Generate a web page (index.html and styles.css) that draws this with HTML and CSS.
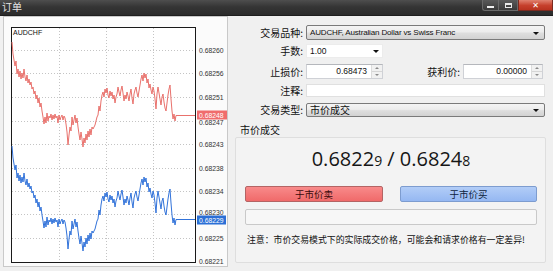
FILE: index.html
```html
<!DOCTYPE html>
<html>
<head>
<meta charset="utf-8">
<title>订单</title>
<link rel="stylesheet" href="styles.css">
</head>
<body>
<div class="window">
  <div class="titlebar">
    <span class="title">订单</span>
    <div class="controls">
      <span class="wbtn min"><i></i></span>
      <span class="wbtn max"><i></i></span>
      <span class="wbtn close">✕</span>
    </div>
  </div>
  <div class="main">
    <div class="chart-panel">
      <svg class="chart" width="223" height="249" viewBox="4 18 223 249">
        <rect x="11.5" y="28.5" width="184" height="235" fill="#fff" stroke="#1a1a1a"/>
        <g stroke="#c4c4c4" stroke-dasharray="1 2" stroke-width="1">
          <line x1="12" y1="51.5" x2="195" y2="51.5"/>
          <line x1="12" y1="74.5" x2="195" y2="74.5"/>
          <line x1="12" y1="98.5" x2="195" y2="98.5"/>
          <line x1="12" y1="122.5" x2="195" y2="122.5"/>
          <line x1="12" y1="145.5" x2="195" y2="145.5"/>
          <line x1="12" y1="169.5" x2="195" y2="169.5"/>
          <line x1="12" y1="192.5" x2="195" y2="192.5"/>
          <line x1="12" y1="215.5" x2="195" y2="215.5"/>
          <line x1="12" y1="239.5" x2="195" y2="239.5"/>
          <line x1="59.5" y1="29" x2="59.5" y2="263"/>
          <line x1="106.5" y1="29" x2="106.5" y2="263"/>
          <line x1="153.5" y1="29" x2="153.5" y2="263"/>
        </g>
        <text class="sym-label" x="13" y="36">AUDCHF</text>
        <g>
          <polyline class="ask" fill="none" stroke-width="1" points="12,43 13,55 15,67 16,62 17,75 18,70 19,78 20,72 21,80 22,74 23,79 24,70 25,78 26,82 27,76 28,84 29,80 30,86 31,83 32,90 33,88 34,95 35,92 36,100 37,96 38,104 39,99 40,108 41,104 42,112 43,118 44,125 45,118 46,124 47,114 48,122 49,117 50,119 51,115 52,121 53,116 54,120 55,115 56,119 57,117 58,124 59,116 60,121 61,118 62,116 63,121 64,117 65,119 66,125 67,133 68,146 69,136 70,128 71,132 72,118 73,126 74,121 75,116 76,124 77,119 78,128 79,135 80,141 81,133 82,140 83,148 84,139 85,144 86,135 87,141 88,132 89,138 90,130 91,136 92,128 93,130 94,128 95,126 96,122 97,118 98,116 99,107 100,112 101,102 102,96 103,93 104,98 105,90 106,94 107,89 108,96 109,99 110,92 111,97 112,93 113,100 114,96 115,104 116,98 117,95 118,88 119,93 120,97 121,91 122,87 123,94 124,102 125,96 126,100 127,93 128,97 129,102 130,95 131,90 132,99 133,105 134,95 135,91 136,88 137,94 138,98 139,92 140,86 141,80 142,76 143,82 144,74 145,79 146,75 147,84 148,80 149,89 150,85 151,91 152,95 153,88 154,92 155,100 156,110 157,95 158,88 159,94 160,100 161,106 162,98 163,95 164,103 165,109 166,112 167,104 168,96 169,90 170,86 171,100 172,112 173,120 174,115 175,122 176,116.5 195,116.5"/>
        </g>
        <g transform="translate(0,104)">
          <polyline class="bid" fill="none" stroke-width="1" points="12,43 13,55 15,67 16,62 17,75 18,70 19,78 20,72 21,80 22,74 23,79 24,70 25,78 26,82 27,76 28,84 29,80 30,86 31,83 32,90 33,88 34,95 35,92 36,100 37,96 38,104 39,99 40,108 41,104 42,112 43,118 44,125 45,118 46,124 47,114 48,122 49,117 50,119 51,115 52,121 53,116 54,120 55,115 56,119 57,117 58,124 59,116 60,121 61,118 62,116 63,121 64,117 65,119 66,125 67,133 68,146 69,136 70,128 71,132 72,118 73,126 74,121 75,116 76,124 77,119 78,128 79,135 80,141 81,133 82,140 83,148 84,139 85,144 86,135 87,141 88,132 89,138 90,130 91,136 92,128 93,130 94,128 95,126 96,122 97,118 98,116 99,107 100,112 101,102 102,96 103,93 104,98 105,90 106,94 107,89 108,96 109,99 110,92 111,97 112,93 113,100 114,96 115,104 116,98 117,95 118,88 119,93 120,97 121,91 122,87 123,94 124,102 125,96 126,100 127,93 128,97 129,102 130,95 131,90 132,99 133,105 134,95 135,91 136,88 137,94 138,98 139,92 140,86 141,80 142,76 143,82 144,74 145,79 146,75 147,84 148,80 149,89 150,85 151,91 152,95 153,88 154,92 155,100 156,110 157,95 158,88 159,94 160,100 161,106 162,98 163,95 164,103 165,109 166,112 167,104 168,96 169,90 170,86 171,100 172,112 173,120 174,115 175,122 176,116.5 195,116.5"/>
        </g>
        <g class="ticks">
          <text x="199" y="54">0.68260</text>
          <text x="199" y="77">0.68256</text>
          <text x="199" y="101">0.68251</text>
          <text x="199" y="126">0.68247</text>
          <text x="199" y="148">0.68243</text>
          <text x="199" y="172">0.68238</text>
          <text x="199" y="195">0.68234</text>
          <text x="199" y="215.5">0.68230</text>
          <text x="199" y="242">0.68225</text>
          <text x="199" y="265">0.68221</text>
        </g>
        <rect x="197" y="111.5" width="30" height="9" fill="#f06c6c"/>
        <text class="tag" x="199" y="118.8">0.68248</text>
        <rect x="197" y="216.5" width="29" height="9" fill="#2b6fd6"/>
        <text class="tag" x="199" y="223.8">0.68229</text>
      </svg>
    </div>

    <div class="order">
      <div class="row r1">
        <span class="lbl">交易品种:</span>
        <div class="select full"><span class="latin">AUDCHF, Australian Dollar vs Swiss Franc</span><b class="arrow"></b></div>
      </div>
      <div class="row r2">
        <span class="lbl">手数:</span>
        <div class="combo"><span class="num">1.00</span><b class="arrow"></b></div>
      </div>
      <div class="row r3">
        <span class="lbl">止损价:</span>
        <div class="spin sl"><span class="num">0.68473</span><span class="spinbtns"><i class="up"></i><i class="down"></i></span></div>
        <span class="lbl lbl2">获利价:</span>
        <div class="spin tp"><span class="num">0.00000</span><span class="spinbtns"><i class="up"></i><i class="down"></i></span></div>
      </div>
      <div class="row r4">
        <span class="lbl">注释:</span>
        <div class="textbox"></div>
      </div>
      <div class="row r5">
        <span class="lbl">交易类型:</span>
        <div class="select full"><span class="cjk">市价成交</span><b class="arrow"></b></div>
      </div>

      <div class="group-title">市价成交</div>
      <div class="group">
        <div class="quote">0.6822<small>9</small> / 0.6824<small>8</small></div>
        <div class="actions">
          <button class="btn sell">于市价卖</button>
          <button class="btn buy">于市价买</button>
        </div>
        <div class="progress"></div>
        <p class="note">注意：市价交易模式下的实际成交价格，可能会和请求价格有一定差异!</p>
      </div>
    </div>
  </div>
</div>
</body>
</html>
```

FILE: styles.css
```css
* { box-sizing: border-box; }

html, body {
  margin: 0;
  padding: 0;
  width: 553px;
  height: 271px;
  overflow: hidden;
  background: #f0f0f0;
  font-family: "Noto Sans CJK SC", "Liberation Sans", sans-serif;
}

.window {
  width: 553px;
  height: 271px;
  background: #f0f0f0;
}

.titlebar {
  height: 16px;
  display: flex;
  justify-content: space-between;
  align-items: flex-start;
  background: linear-gradient(to bottom, #4e4e4e 0%, #353535 45%, #2b2b2b 100%);
  border-bottom: 1px solid #1e1e1e;
}

.title {
  color: #e6e6e6;
  font-size: 10px;
  line-height: 13px;
  padding-left: 2px;
}

.controls {
  display: flex;
}

.wbtn {
  height: 11px;
  display: flex;
  align-items: center;
  justify-content: center;
  border: 1px solid #6a6a6a;
  border-top: none;
  background: linear-gradient(to bottom, #5a5a5a, #3a3a3a);
}

.wbtn.min {
  width: 16px;
  border-radius: 0 0 0 3px;
  border-right: none;
}

.wbtn.min i {
  width: 7px;
  height: 2px;
  margin-top: 3px;
  background: #f0f0f0;
}

.wbtn.max {
  width: 20px;
}

.wbtn.max i {
  width: 7px;
  height: 5px;
  border: 1px solid #e8e8e8;
  border-top-width: 2px;
}

.wbtn.close {
  width: 35px;
  border-color: #7a2a20;
  background: linear-gradient(to bottom, #e0816f, #c6402c 55%, #b8321f);
  color: #fff;
  font-size: 8px;
  font-weight: bold;
  font-family: "DejaVu Sans", sans-serif;
}

.main {
  display: flex;
  padding: 0 0 0 3px;
}

.chart-panel {
  width: 225px;
  height: 251px;
  border: 1px solid #c9c9c9;
  background: #fbfbfb;
}

.chart {
  display: block;
}

.chart .ask { stroke: #e9716c; }
.chart .bid { stroke: #3273da; }

.sym-label {
  font-family: "Liberation Sans", sans-serif;
  font-size: 7px;
  fill: #111;
}

.ticks text {
  font-family: "Liberation Sans", sans-serif;
  font-size: 6.8px;
  fill: #333;
}

.tag {
  font-family: "Liberation Sans", sans-serif;
  font-size: 6.8px;
  fill: #fff;
}

.order {
  margin-left: 7px;
  width: 311px;
  padding-top: 9px;
  display: flex;
  flex-direction: column;
}

.row {
  display: flex;
  align-items: center;
}

.r2 { margin-top: 4px; }
.r3 { margin-top: 6px; }
.r4 { margin-top: 5px; }
.r5 { margin-top: 6px; }

.lbl {
  width: 68px;
  margin-right: 3px;
  text-align: right;
  font-size: 10px;
  line-height: 12px;
  color: #111;
  white-space: nowrap;
}

.lbl2 {
  width: 77px;
}

.select {
  position: relative;
  height: 15px;
  border: 1px solid #7a7a7a;
  border-radius: 2px;
  background: linear-gradient(to bottom, #f4f4f4 0%, #ececec 45%, #dedede 55%, #d2d2d2 100%);
  display: flex;
  align-items: center;
  padding-left: 3px;
}

.select.full {
  width: 239px;
}

.r5 .select { height: 14px; }

.arrow {
  position: absolute;
  right: 5px;
  top: 50%;
  margin-top: -1px;
  width: 0;
  height: 0;
  border-left: 3px solid transparent;
  border-right: 3px solid transparent;
  border-top: 3px solid #111;
}

.latin {
  font-family: "Liberation Sans", sans-serif;
  font-size: 8px;
  letter-spacing: -0.15px;
  color: #111;
}

.cjk {
  font-size: 10px;
  line-height: 12px;
  color: #111;
}

.combo {
  position: relative;
  width: 77px;
  height: 14px;
  background: #fff;
  border: 1px solid #ececec;
  display: flex;
  align-items: center;
  padding-left: 3px;
}

.combo .arrow { right: 3px; }

.num {
  font-family: "Liberation Sans", sans-serif;
  font-size: 8.5px;
  color: #111;
}

.spin {
  height: 15px;
  display: flex;
  background: #fff;
  border: 1px solid #cfd1d6;
  border-top-color: #b5b7bc;
}

.spin.sl { width: 77px; }
.spin.tp { width: 80px; }

.spin .num {
  flex: 1;
  text-align: right;
  padding-right: 4px;
  line-height: 13px;
}

.spinbtns {
  width: 11px;
  display: flex;
  flex-direction: column;
  border-left: 1px solid #dcdcdc;
  background: #f1f1f1;
}

.spinbtns i {
  flex: 1;
  display: flex;
  align-items: center;
  justify-content: center;
}

.spinbtns i.up { border-bottom: 1px solid #d6d6d6; }

.spinbtns i::after {
  content: "";
  width: 0;
  height: 0;
  border-left: 2px solid transparent;
  border-right: 2px solid transparent;
}

.spinbtns i.up::after { border-bottom: 2px solid #8a8a8a; }
.spinbtns i.down::after { border-top: 2px solid #8a8a8a; }

.textbox {
  width: 239px;
  height: 13px;
  background: #fff;
  border: 1px solid #e0e0e0;
}

.group-title {
  margin-top: 6px;
  padding-left: 5px;
  font-size: 10px;
  line-height: 13px;
  color: #111;
}

.group {
  margin-top: 1px;
  width: 311px;
  height: 126px;
  border: 1px solid #dedede;
  border-radius: 2px;
  background: #f3f3f3;
  padding: 9px 8px 0 9px;
  display: flex;
  flex-direction: column;
}

.quote {
  text-align: center;
  font-family: "Open Sans", sans-serif;
  font-size: 20px;
  line-height: 24px;
  color: #161616;
}

.quote small {
  font-size: 14px;
}

.actions {
  margin-top: 13px;
  display: flex;
  justify-content: space-between;
}

.btn {
  height: 16px;
  padding: 0;
  font-family: "Noto Sans CJK SC", sans-serif;
  font-size: 9.5px;
  line-height: 14px;
  border-radius: 2px;
  cursor: pointer;
}

.btn.sell {
  width: 138px;
  border: 1px solid #b46464;
  background: linear-gradient(to bottom, #f88a8a, #f06a6a);
  color: #3a0a0a;
}

.btn.buy {
  width: 137px;
  border: 1px solid #7d9ccf;
  background: linear-gradient(to bottom, #b2cdf7, #95b8f2);
  color: #0e1e3c;
}

.progress {
  margin-top: 7px;
  height: 16px;
  border: 1px solid #c9c9c9;
  border-radius: 2px;
  background: #f7f7f7;
}

.note {
  margin: 9px 0 0 2px;
  font-size: 8.9px;
  line-height: 12px;
  color: #111;
  white-space: nowrap;
}
```
